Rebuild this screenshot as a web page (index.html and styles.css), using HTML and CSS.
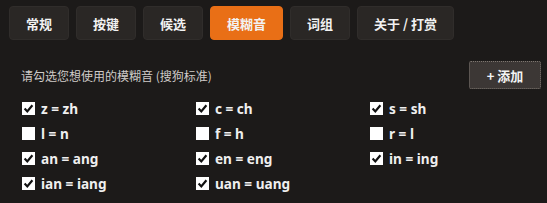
FILE: index.html
```html
<!DOCTYPE html>
<html lang="zh-CN">
<head>
  <meta charset="UTF-8">
  <title>模糊音设置</title>
  <link rel="stylesheet" href="styles.css">
</head>
<body>

  <div class="tabs">
    <button class="tab">常规</button>
    <button class="tab">按键</button>
    <button class="tab">候选</button>
    <button class="tab active">模糊音</button>
    <button class="tab">词组</button>
    <button class="tab">关于 / 打赏</button>
  </div>

  <div class="panel">
    <div class="panel-head">
      <span class="hint">请勾选您想使用的模糊音 (搜狗标准)</span>
      <button class="add-btn">+ 添加</button>
    </div>

    <div class="fuzzy-list" id="fuzzyList"></div>
  </div>

  <script>
    const pairs = [
      ["z = zh", true], ["c = ch", true], ["s = sh", true],
      ["l = n", false], ["f = h", false], ["r = l", false],
      ["an = ang", true], ["en = eng", true], ["in = ing", true],
      ["ian = iang", true], ["uan = uang", true]
    ];

    const list = document.getElementById('fuzzyList');
    const tick = '<svg viewBox="0 0 13 13" width="13" height="13"><path d="M2.6 6.6 L5.3 9.4 L10.4 3.2" fill="none" stroke="#111" stroke-width="2.2"/></svg>';

    pairs.forEach(([text, on]) => {
      const item = document.createElement('label');
      item.className = 'item' + (on ? ' on' : '');
      item.innerHTML = '<span class="box">' + tick + '</span><span class="txt">' + text + '</span>';
      item.addEventListener('click', () => item.classList.toggle('on'));
      list.appendChild(item);
    });
  </script>

</body>
</html>
```

FILE: styles.css
```css
body {
  margin: 0;
  padding: 6px 6px 0 9px;
  background-color: #1c1a19;
  color: #eee;
  font-family: "Noto Sans", "Noto Sans CJK SC", sans-serif;
}

.tabs {
  display: flex;
  gap: 7px;
}

.tab {
  height: 34px;
  padding: 0 16px;
  font-family: "Noto Sans CJK SC", sans-serif;
  font-size: 13px;
  font-weight: bold;
  color: #f2f2f2;
  background-color: #2a2725;
  border: 1px solid #302d2b;
  border-radius: 4px;
  cursor: pointer;
}

.tab.active {
  background-color: #e96f16;
  border-color: #e96f16;
}

.panel {
  padding: 21px 0 0 12px;
}

.panel-head {
  display: flex;
  justify-content: space-between;
  align-items: center;
}

.hint {
  font-family: "Noto Sans CJK SC", sans-serif;
  font-size: 12px;
  color: #cfcbc8;
}

.add-btn {
  width: 72px;
  height: 28px;
  font-family: "Noto Sans CJK SC", sans-serif;
  font-size: 13px;
  font-weight: bold;
  color: #f4f4f4;
  background-color: #3c3735;
  border: 1px dotted #7d7670;
  border-radius: 2px;
  cursor: pointer;
}

.fuzzy-list {
  display: grid;
  grid-template-columns: repeat(3, 174px);
  grid-auto-rows: 25px;
  margin-top: 7px;
}

.item {
  display: flex;
  align-items: center;
  gap: 6px;
  padding-left: 1px;
  font-size: 13.6px;
  font-weight: bold;
  color: #efefef;
  cursor: pointer;
}

.box {
  width: 13px;
  height: 13px;
  background-color: #fff;
  display: flex;
}

.box svg {
  visibility: hidden;
}

.item.on .box svg {
  visibility: visible;
}
```
